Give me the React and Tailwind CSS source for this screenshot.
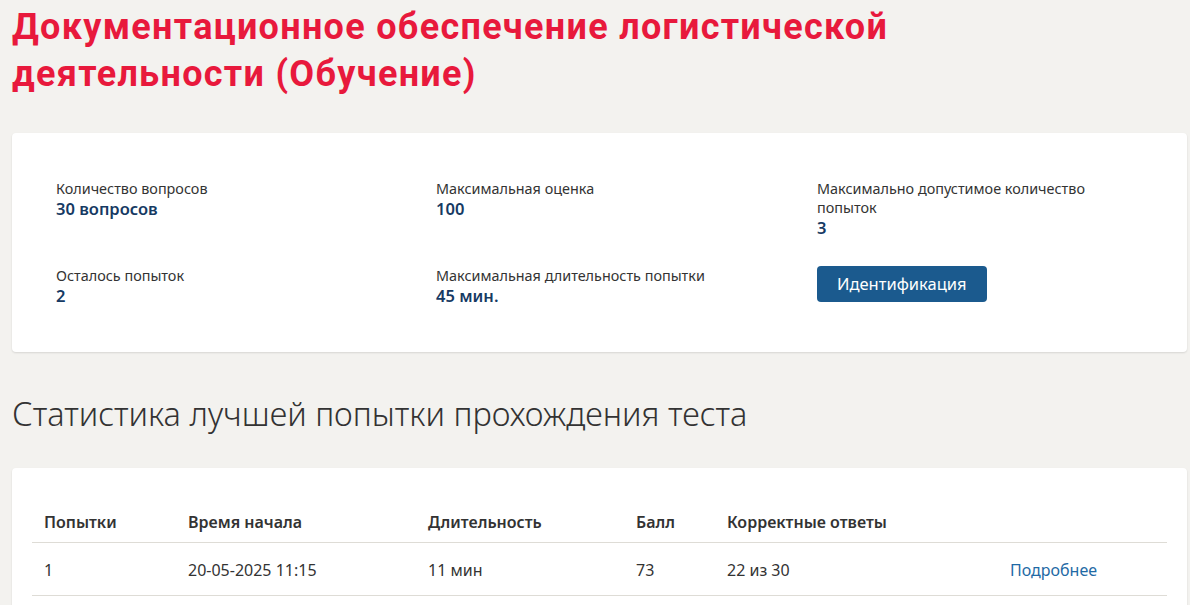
export default function App() {
  const info = [
    { label: 'Количество вопросов', value: '30 вопросов' },
    { label: 'Максимальная оценка', value: '100' },
    { label: 'Максимально допустимое количество попыток', value: '3' },
    { label: 'Осталось попыток', value: '2' },
    { label: 'Максимальная длительность попытки', value: '45 мин.' },
  ]

  return (
    <div className="min-h-screen bg-[#f3f2ef] pl-3 pr-[3px] pt-[4px] pb-10 font-['Noto_Sans',sans-serif] text-[#333]">
      <h1 className="max-w-[900px] font-['Roboto',sans-serif] text-[36px] font-bold leading-[47px] tracking-[1.3px] text-[#e8193c]">
        Документационное обеспечение логистической деятельности (Обучение)
      </h1>

      <div className="mt-[35px] rounded bg-white pt-[46px] pb-[46px] pl-[44px] shadow-[0_1px_2px_rgba(0,0,0,0.12)]">
        <div className="grid grid-cols-[380px_381px_300px] gap-y-[28px]">
          {info.map((item) => (
            <div key={item.label}>
              <p className="text-[14.4px] leading-[19px]">{item.label}</p>
              <p className="text-[16.5px] font-semibold leading-[21px] text-[#163a63]">{item.value}</p>
            </div>
          ))}
          <div>
            <button className="h-[36px] rounded bg-[#1b5a8e] px-[20px] text-[16.5px] text-white">
              Идентификация
            </button>
          </div>
        </div>
      </div>

      <h2 className="mt-[40px] text-[32.5px] font-light leading-[44px] text-[#333]">
        Статистика лучшей попытки прохождения теста
      </h2>

      <div className="mt-[32px] rounded bg-white px-5 pt-[42px] pb-8 shadow-[0_1px_2px_rgba(0,0,0,0.12)]">
        <table className="w-full border-collapse text-left text-[16px]">
          <thead>
            <tr className="border-b border-[#dedcd6]">
              <th className="w-[156px] pb-[8px] pl-3 font-semibold">Попытки</th>
              <th className="w-[240px] pb-[8px] font-semibold">Время начала</th>
              <th className="w-[208px] pb-[8px] font-semibold">Длительность</th>
              <th className="w-[91px] pb-[8px] font-semibold">Балл</th>
              <th className="w-[283px] pb-[8px] font-semibold">Корректные ответы</th>
              <th className="pb-[8px]"></th>
            </tr>
          </thead>
          <tbody>
            <tr className="border-b border-[#dedcd6]">
              <td className="pt-[15px] pb-[13px] pl-3">1</td>
              <td className="pt-[15px] pb-[13px]">20-05-2025 11:15</td>
              <td className="pt-[15px] pb-[13px]">11 мин</td>
              <td className="pt-[15px] pb-[13px]">73</td>
              <td className="pt-[15px] pb-[13px]">22 из 30</td>
              <td className="pt-[15px] pb-[13px]">
                <a href="#" className="text-[#1f6aa5]">Подробнее</a>
              </td>
            </tr>
          </tbody>
        </table>
      </div>
    </div>
  )
}
